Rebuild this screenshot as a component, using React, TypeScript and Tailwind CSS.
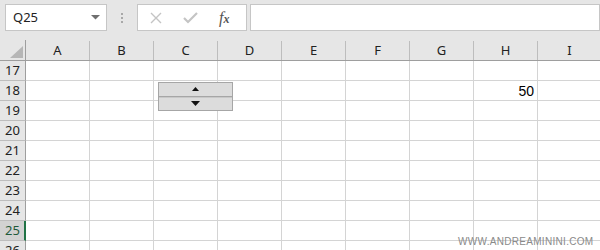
import React from "react";

const cols = ["A", "B", "C", "D", "E", "F", "G", "H", "I"];
const rows = [17, 18, 19, 20, 21, 22, 23, 24, 25, 26];

export default function App() {
  return (
    <div
      className="relative w-[600px] h-[250px] overflow-hidden bg-[#e6e6e6]"
      style={{ fontFamily: '"Noto Sans", "Open Sans", sans-serif' }}
    >
      {/* Toolbar */}
      <div className="h-[40px] flex items-start pt-[4px]">
        <div className="ml-[5px] w-[102px] h-[27px] bg-white border border-[#c6c6c6] flex items-center justify-between pl-[7px] pr-[6px]">
          <span className="text-[13px] text-[#222] leading-none">Q25</span>
          <svg width="9" height="5" viewBox="0 0 9 5">
            <polygon points="0,0 9,0 4.5,4.5" fill="#6f6f6f" />
          </svg>
        </div>
        <div className="w-[30px] h-[27px] flex flex-col items-center justify-center gap-[2px]">
          <div className="w-[2px] h-[2px] bg-[#a8a8a8]" />
          <div className="w-[2px] h-[2px] bg-[#a8a8a8]" />
          <div className="w-[2px] h-[2px] bg-[#a8a8a8]" />
        </div>
        <div className="w-[110px] h-[27px] bg-white border border-[#c6c6c6] flex items-center">
          <svg className="ml-[12px]" width="12" height="12" viewBox="0 0 12 12">
            <path d="M1 1 L11 11 M11 1 L1 11" stroke="#c4c4c4" strokeWidth="1.4" />
          </svg>
          <svg className="ml-[21px]" width="15" height="12" viewBox="0 0 15 12">
            <path d="M1 6 L5 10 L14 1" stroke="#c4c4c4" strokeWidth="2.2" fill="none" />
          </svg>
          <span
            className="ml-[21px] text-[16px] italic text-[#555] leading-none"
            style={{ fontFamily: '"Liberation Serif", serif' }}
          >
            f<span className="text-[12px] font-bold">x</span>
          </span>
        </div>
        <div className="ml-[3px] flex-1 h-[27px] bg-white border border-[#c6c6c6]" />
      </div>

      {/* Grid */}
      <div className="grid grid-cols-[26px_repeat(9,64px)] bg-white">
        <div className="h-[21px] bg-[#e6e6e6] border-b border-r border-[#9e9e9e] relative">
          <svg className="absolute left-[10px] top-[6px]" width="13" height="12" viewBox="0 0 13 12">
            <polygon points="13,0 13,12 0,12" fill="#b6b6b6" />
          </svg>
        </div>
        {cols.map((c) => (
          <div
            key={c}
            className="h-[21px] bg-[#e6e6e6] border-b border-[#9e9e9e] flex items-end"
          >
            <div className="flex-1 h-full flex items-center justify-center text-[13px] text-[#222] leading-none">
              {c}
            </div>
            <div className="w-px h-[19px] bg-[#bdbdbd]" />
          </div>
        ))}
        {rows.map((r) => (
          <React.Fragment key={r}>
            <div
              className={
                "h-[20px] border-b border-[#bdbdbd] flex items-center justify-center text-[13px] leading-none " +
                (r === 25
                  ? "bg-[#d2d2d2] border-r-2 border-r-[#217346] text-[#1e5a3a] pl-[1px]"
                  : "bg-[#e6e6e6] border-r border-r-[#9e9e9e] text-[#222]")
              }
            >
              {r}
            </div>
            {cols.map((c) => (
              <div
                key={c}
                className="h-[20px] border-b border-r border-[#d4d4d4] flex items-center justify-end pr-[3px] text-[14px] text-black leading-none"
                style={{ fontFamily: '"Liberation Sans", Arial, sans-serif' }}
              >
                {r === 18 && c === "H" ? "50" : ""}
              </div>
            ))}
          </React.Fragment>
        ))}
      </div>

      {/* Spinner control */}
      <div className="absolute left-[158px] top-[82px] w-[75px] h-[29px] border border-[#a6a6a6] bg-[#dcdcdc] flex flex-col">
        <div className="flex-1 flex items-center justify-center border-b border-[#a6a6a6]">
          <svg width="7" height="4" viewBox="0 0 7 4">
            <polygon points="3.5,0 7,4 0,4" fill="#111" />
          </svg>
        </div>
        <div className="flex-1 flex items-center justify-center border-t border-[#c8c8c8]">
          <svg width="9" height="5" viewBox="0 0 9 5">
            <polygon points="0,0 9,0 4.5,5" fill="#111" />
          </svg>
        </div>
      </div>

      {/* Watermark */}
      <div
        className="absolute left-[458px] top-[237px] text-[10px] leading-none text-[#8a8a8a] tracking-[0.3px]"
        style={{ fontFamily: '"Liberation Sans", Arial, sans-serif' }}
      >
        WWW.ANDREAMININI.COM
      </div>
    </div>
  );
}
